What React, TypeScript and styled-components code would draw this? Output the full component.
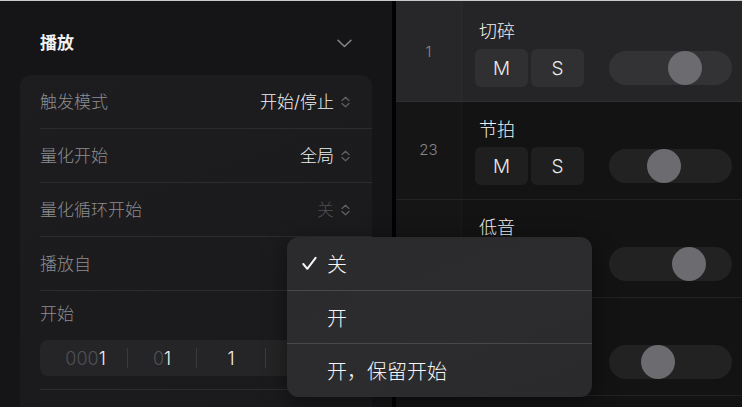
import styled, { createGlobalStyle } from "styled-components";

const GlobalStyle = createGlobalStyle`
  html, body {
    margin: 0;
    padding: 0;
    background: #131315;
    overflow: hidden;
  }
  * {
    box-sizing: border-box;
  }
`;

const FONT = `"Inter", "Noto Sans CJK SC", sans-serif`;

type Track = {
  num: string;
  name: string;
  knob: number;
};

const tracks: Track[] = [
  { num: "1", name: "切碎", knob: 76 },
  { num: "23", name: "节拍", knob: 55 },
  { num: "", name: "低音", knob: 80 },
  { num: "", name: "和弦", knob: 49 },
];

const settings = [
  { label: "触发模式", value: "开始/停止", tone: "bright" },
  { label: "量化开始", value: "全局", tone: "bright" },
  { label: "量化循环开始", value: "关", tone: "dim" },
  { label: "播放自", value: "", tone: "dim" },
];

export default function App() {
  return (
    <>
      <GlobalStyle />
      <Screen>
        <Inspector>
          <SectionHeader>
            <SectionTitle>播放</SectionTitle>
            <svg width="15" height="9" viewBox="0 0 15 9">
              <path d="M1 1.2 L7.5 7.5 L14 1.2" fill="none" stroke="#8a8a8f" strokeWidth="1.4" strokeLinecap="round" strokeLinejoin="round" />
            </svg>
          </SectionHeader>
          <Card>
            {settings.map((s) => (
              <SettingRow key={s.label}>
                <Label>{s.label}</Label>
                {s.value && (
                  <ValueGroup>
                    <Value $tone={s.tone}>{s.value}</Value>
                    <UpDown />
                  </ValueGroup>
                )}
              </SettingRow>
            ))}
            <StartRow>
              <Label>开始</Label>
              <PositionField>
                <Segment $wide>
                  <Dim>000</Dim>1
                </Segment>
                <Segment>
                  <Dim>0</Dim>1
                </Segment>
                <Segment>1</Segment>
                <Segment $wide $last>
                  <Dim>000</Dim>1
                </Segment>
              </PositionField>
            </StartRow>
            <SettingRow>
              <Label>循环长度</Label>
            </SettingRow>
          </Card>
        </Inspector>
        <Splitter />
        <TrackList>
          {tracks.map((t, i) => (
            <TrackRow key={t.name} $active={i === 0} $first={i === 0}>
              <TrackNumber $first={i === 0}>{t.num}</TrackNumber>
              <TrackBody $first={i === 0}>
                <TrackName>{t.name}</TrackName>
                <Controls>
                  <ToggleButton>M</ToggleButton>
                  <ToggleButton>S</ToggleButton>
                  <Slider>
                    <Knob style={{ left: t.knob - 17 }} />
                  </Slider>
                </Controls>
              </TrackBody>
            </TrackRow>
          ))}
        </TrackList>
        <Menu>
          <MenuItem>
            <Check>
              <svg width="15" height="15" viewBox="0 0 15 15">
                <path d="M1.3 8 L5.3 12.8 L13.6 1.8" fill="none" stroke="#f5f5f7" strokeWidth="2" strokeLinecap="round" strokeLinejoin="round" />
              </svg>
            </Check>
            关
          </MenuItem>
          <MenuItem>
            <Check />开
          </MenuItem>
          <MenuItem $last>
            <Check />开，保留开始
          </MenuItem>
        </Menu>
      </Screen>
    </>
  );
}

function UpDown() {
  return (
    <svg width="11" height="14" viewBox="0 0 11 14">
      <path d="M2 5.5 L5.5 2.2 L9 5.5 M2 8.5 L5.5 11.8 L9 8.5" fill="none" stroke="#5f5f64" strokeWidth="1.2" strokeLinecap="round" strokeLinejoin="round" />
    </svg>
  );
}

const Screen = styled.div`
  position: relative;
  width: 742px;
  height: 407px;
  border-top: 1px solid #c9c9cb;
  display: flex;
  overflow: hidden;
  font-family: ${FONT};
  font-weight: 300;
`;

const Inspector = styled.div`
  width: 392px;
  flex-shrink: 0;
  padding: 0 20px;
  background: #151517;
  display: flex;
  flex-direction: column;
`;

const SectionHeader = styled.div`
  height: 74px;
  flex-shrink: 0;
  display: flex;
  justify-content: space-between;
  align-items: center;
  padding: 10px 20px 0 20px;
`;

const SectionTitle = styled.span`
  font-size: 17px;
  line-height: 22px;
  font-weight: 700;
  color: #f2f2f4;
`;

const Card = styled.div`
  flex: 1;
  border-radius: 12px 12px 0 0;
  background: linear-gradient(160deg, #1d1d1f 0%, #1b1b1d 60%, #1a1a1c 100%);
  padding-left: 20px;
  overflow: hidden;
`;

const SettingRow = styled.div`
  height: 54px;
  display: flex;
  align-items: center;
  justify-content: space-between;
  padding-right: 21px;
  border-bottom: 1px solid #2c2c2e;
`;

const Label = styled.span`
  font-size: 17px;
  line-height: 22px;
  color: #8d8d92;
`;

const ValueGroup = styled.span`
  display: flex;
  align-items: center;
  gap: 6px;
`;

const Value = styled.span<{ $tone: string }>`
  font-size: 17px;
  line-height: 22px;
  color: ${(p) => (p.$tone === "bright" ? "#f0f0f2" : "#4f4f53")};
`;

const StartRow = styled.div`
  display: flex;
  flex-direction: column;
  padding: 12px 20px 13px 0;
  border-bottom: 1px solid #2c2c2e;
`;

const PositionField = styled.div`
  margin-top: 15px;
  height: 36px;
  border-radius: 8px;
  background: #252527;
  display: flex;
  align-items: center;
`;

const Segment = styled.div<{ $wide?: boolean; $last?: boolean }>`
  width: ${(p) => (p.$wide ? "88px" : "69px")};
  flex: ${(p) => (p.$last ? 1 : "none")};
  height: 20px;
  display: flex;
  align-items: center;
  justify-content: center;
  padding-left: ${(p) => (p.$wide ? "4px" : "0")};
  font-size: 18px;
  color: #f2f2f4;
  border-right: ${(p) => (p.$last ? "none" : "1px solid #3a3a3d")};
`;

const Dim = styled.span`
  color: #505055;
`;

const Splitter = styled.div`
  width: 4px;
  flex-shrink: 0;
  background: #020202;
`;

const TrackList = styled.div`
  flex: 1;
  display: flex;
  flex-direction: column;
  background: #131313;
`;

const TrackRow = styled.div<{ $active: boolean; $first: boolean }>`
  height: ${(p) => (p.$first ? "101px" : "98px")};
  flex-shrink: 0;
  display: grid;
  grid-template-columns: 66px 1fr;
  background: ${(p) => (p.$active ? "#252527" : "#131313")};
  border-bottom: 1px solid ${(p) => (p.$active ? "#303032" : "#222224")};
`;

const TrackNumber = styled.div<{ $first: boolean }>`
  padding-top: ${(p) => (p.$first ? "40px" : "37px")};
  text-align: center;
  font-size: 15px;
  line-height: 22px;
  color: #86868b;
  border-right: 1px solid rgba(255, 255, 255, 0.025);
  background: rgba(255, 255, 255, 0.012);
`;

const TrackBody = styled.div<{ $first: boolean }>`
  padding: ${(p) => (p.$first ? "21px" : "18px")} 0 0 13px;
  display: flex;
  flex-direction: column;
  gap: 7px;
`;

const TrackName = styled.div`
  padding-left: 4px;
  font-size: 18px;
  line-height: 20px;
  color: #f2f2f4;
`;

const Controls = styled.div`
  display: flex;
  align-items: center;
  gap: 3px;
`;

const ToggleButton = styled.div`
  width: 53px;
  height: 38px;
  border-radius: 6px;
  background: rgba(255, 255, 255, 0.055);
  display: flex;
  align-items: center;
  justify-content: center;
  font-size: 19px;
  color: #e8e8ea;
`;

const Slider = styled.div`
  position: relative;
  margin-left: 22px;
  width: 123px;
  height: 34px;
  border-radius: 17px;
  background: rgba(255, 255, 255, 0.065);
`;

const Knob = styled.div`
  position: absolute;
  top: 0;
  width: 34px;
  height: 34px;
  border-radius: 50%;
  background: #6c6c70;
`;

const Menu = styled.div`
  position: absolute;
  left: 287px;
  top: 236px;
  width: 305px;
  height: 160px;
  border-radius: 12px;
  background: linear-gradient(160deg, #2b2b2d 0%, #2c2c2e 60%, #2a2a2c 100%);
  box-shadow: 0 6px 24px rgba(0, 0, 0, 0.45);
  overflow: hidden;
  display: flex;
  flex-direction: column;
`;

const MenuItem = styled.div<{ $last?: boolean }>`
  flex: 1;
  display: flex;
  align-items: center;
  padding-left: 15px;
  font-size: 20px;
  color: #f5f5f7;
  border-bottom: ${(p) => (p.$last ? "none" : "1px solid #48484b")};
`;

const Check = styled.span`
  width: 25px;
  display: flex;
  align-items: center;
`;
